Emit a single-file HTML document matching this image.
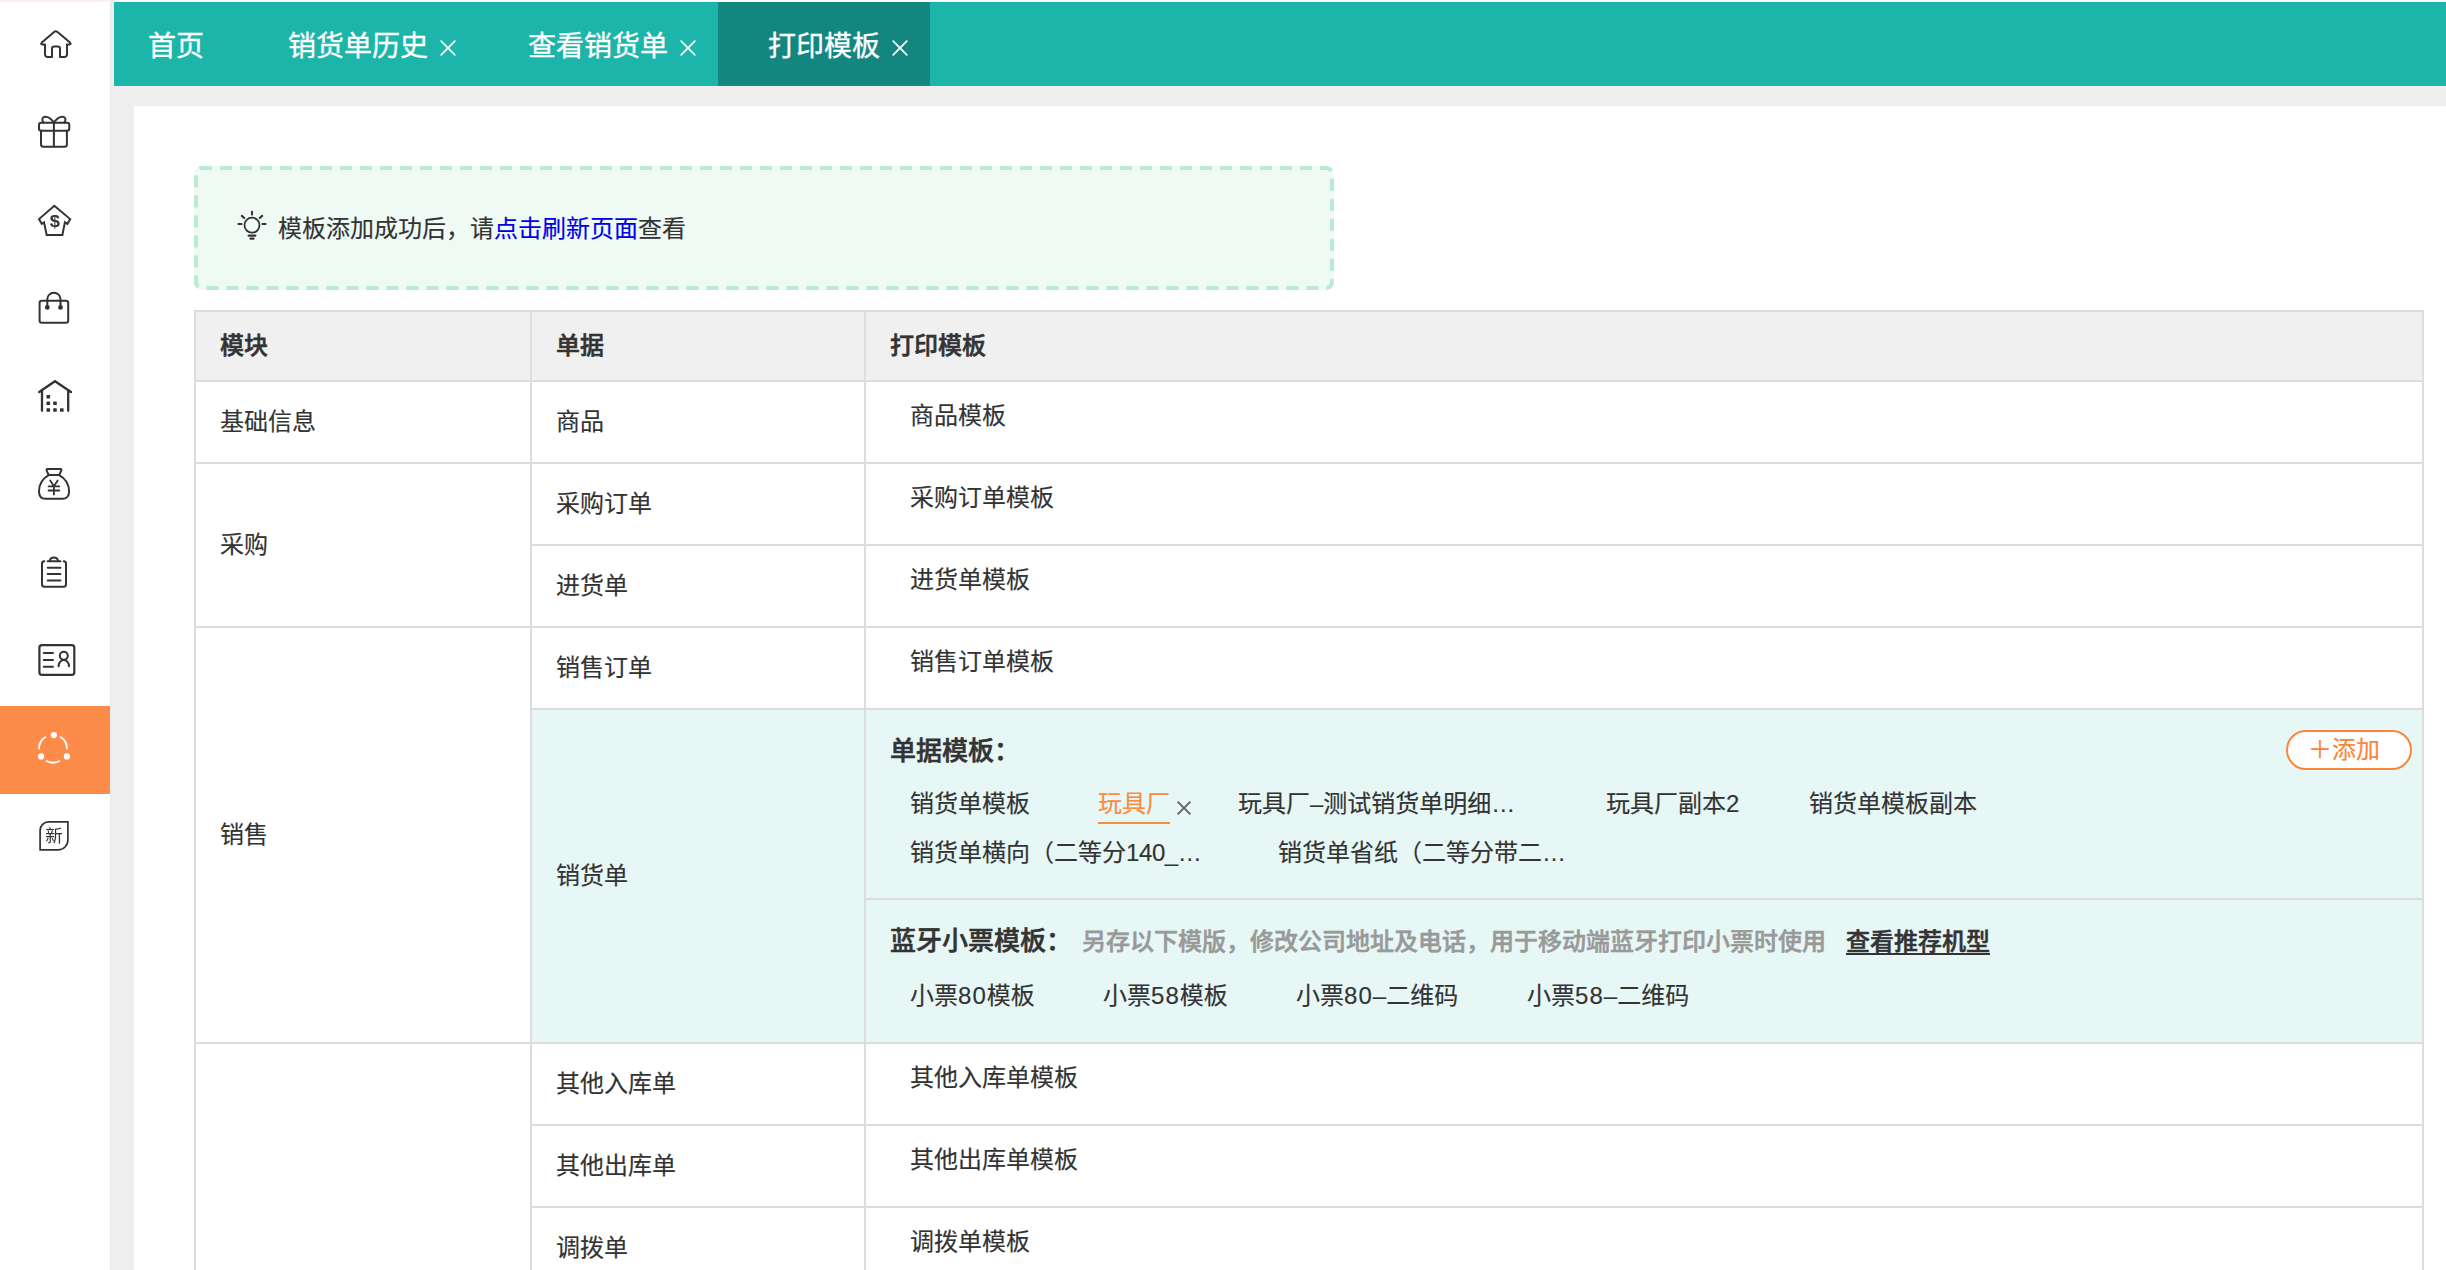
<!DOCTYPE html>
<html lang="zh-CN">
<head>
<meta charset="utf-8">
<title>打印模板</title>
<style>
*{box-sizing:border-box;margin:0;padding:0}
html,body{width:2446px;height:1270px;overflow:hidden;background:#eee}
body{position:relative;font-family:"Liberation Sans","Noto Sans CJK SC",sans-serif;color:#333;font-size:24px}
.abs{position:absolute}
a{text-decoration:none}
#side{position:absolute;left:0;top:0;width:110px;height:1270px;background:#fff;box-shadow:1px 0 0 #e9e9e9}
#side .pink{position:absolute;left:0;top:0;width:110px;height:2px;background:#fdf0ea}
#side .act{position:absolute;left:0;top:706px;width:110px;height:88px;background:#fd8c4a}
#side svg{position:absolute;left:0;top:0}
#topw{position:absolute;left:111px;top:0;width:2335px;height:2px;background:linear-gradient(90deg,#eee,#fff 12px)}
#tabs{position:absolute;left:114px;top:2px;width:2332px;height:84px;background:#1cb5a9}
#tabs .on{position:absolute;left:604px;top:0;width:212px;height:84px;background:#13877f}
.t{position:absolute;white-space:nowrap;line-height:40px;height:40px;-webkit-text-stroke:.15px}
#tabs .t{color:#fff;font-size:28px;top:25px;-webkit-text-stroke:.35px #fff}
#panel{position:absolute;left:134px;top:106px;width:2312px;height:1164px;background:#fff}
.hl{position:absolute;background:#ddd}
.bg{position:absolute}
.b{font-weight:500;-webkit-text-stroke:.55px}
.n{letter-spacing:1.05px}
</style>
</head>
<body>
<div id="side"><div class="pink"></div><div class="act"></div>
<svg style="will-change:transform" width="110" height="1270" viewBox="0 0 110 1270" fill="none" stroke="#333" stroke-width="2" stroke-linecap="round" stroke-linejoin="round">
<!-- home -->
<path d="M45 44.4H42.4Q40.2 44.2 41.8 42.6L54.1 32Q55.8 30.6 57.5 32L70 42.6Q71.6 44.2 69.4 44.4H67V54.5a2.5 2.5 0 0 1-2.5 2.5H60V48.6a2 2 0 0 0-2-2H54a2 2 0 0 0-2 2V57H47.5a2.5 2.5 0 0 1-2.5-2.5Z"/>
<!-- gift -->
<rect x="39" y="122.8" width="30.3" height="8" rx="2.2"/>
<path d="M41 130.8V144.3a2.5 2.5 0 0 0 2.5 2.5H64.4a2.5 2.5 0 0 0 2.5-2.5V130.8M53.9 122.8V146.8"/>
<path d="M53.9 122.4C51 118.6 47.4 116.4 44.9 116.7C42 117.1 41.5 120.2 43.6 122.6M53.9 122.4C56.8 118.6 60.4 116.4 62.9 116.7C65.8 117.1 66.3 120.2 64.2 122.6"/>
<!-- dollar house -->
<path d="M54.3 205.8L70.2 219.1L67.4 223.8L64.9 222.4L62.4 235H46.7L44 222.4L41.8 223.8L39 219.1Z" stroke-linejoin="miter"/>
<text transform="translate(54.7 227) scale(1.16 1)" text-anchor="middle" font-family="Liberation Sans, sans-serif" font-weight="700" font-size="15.7" fill="#333" stroke="none">$</text>
<!-- bag -->
<rect x="39.6" y="300.7" width="28.6" height="22.1" rx="2.2"/>
<path d="M47.3 307.4V299.3a6.6 6.6 0 0 1 13.2 0V307.4"/>
<circle cx="47.3" cy="307.4" r="1.4" fill="#333"/><circle cx="60.5" cy="307.4" r="1.4" fill="#333"/>
<!-- warehouse -->
<path d="M39.2 392L55 381.2L71 392M42 390.5V410.8M68.2 390.5V410.8" stroke-linejoin="miter" stroke-width="2.3"/>
<g fill="#333" stroke="none"><rect x="46.5" y="395" width="3.6" height="3.6" rx=".6"/><rect x="46.5" y="401.4" width="3.6" height="3.6" rx=".6"/><rect x="53.2" y="401.4" width="3.6" height="3.6" rx=".6"/><rect x="46.5" y="408.2" width="3.6" height="3.6" rx=".6"/><rect x="53.2" y="408.2" width="3.6" height="3.6" rx=".6"/><rect x="60" y="408.2" width="3.6" height="3.6" rx=".6"/></g>
<!-- money bag -->
<path d="M48.7 475.1L46.6 470.3a1 1 0 0 1 .9-1.4H60.5a1 1 0 0 1 .9 1.4L59.1 475.1Z"/>
<path d="M48.7 475.1C42.5 478.5 39 485 39 491.5C39 496 41.5 498.8 45.5 498.8H62.5C66.5 498.8 69.1 496 69.1 491.5C69.1 485 65.5 478.5 59.1 475.1"/>
<path d="M50.2 480.5L53.9 486.2L57.7 480.5M53.9 486.2V494.5M48.6 486.4H59.3M48.6 490.5H59.3" stroke-width="1.8"/>
<!-- clipboard -->
<path d="M44.3 561.2a2.4 2.4 0 0 0-2.3 2.4V584.3a2.5 2.5 0 0 0 2.5 2.5H63.5a2.5 2.5 0 0 0 2.5-2.5V563.6a2.4 2.4 0 0 0-2.3-2.4M47.7 561.2H60.4M49.6 561a4.4 4.4 0 0 1 8.6 0M47.7 567.7H60.4M47.7 574.1H60.4M47.7 580.4H60.4"/>
<!-- id card -->
<rect x="39.4" y="645.1" width="34.9" height="29.7" rx="2.6" stroke-width="2.2"/>
<path d="M43.8 653H53M43.8 659.9H53M43.8 666.8H53"/>
<circle cx="63.8" cy="655.8" r="4"/>
<path d="M58.6 666.2a5.2 6.2 0 0 1 10.4 0"/>
<!-- share (active) -->
<g stroke="#fff" stroke-width="1.9" stroke-linecap="butt"><path d="M45.9 736.7A14 14 0 0 0 39 749.2M60.1 736.7A14 14 0 0 1 67 749.2M46 760.8A14 14 0 0 0 60 760.8"/></g>
<g fill="#fff" stroke="none"><circle cx="53.9" cy="735.1" r="3.1"/><circle cx="41.1" cy="756.4" r="3.1"/><circle cx="66.9" cy="756.4" r="3.1"/></g>
<!-- new -->
<path d="M40.1 849.9V830.3a8.5 8.5 0 0 1 8.5-8.5H67.9V840a9.9 9.9 0 0 1-9.9 9.9Z" stroke-width="1.7" stroke-linejoin="miter"/>
<text x="53.9" y="842.2" text-anchor="middle" font-family="Noto Sans CJK SC, sans-serif" font-weight="400" font-size="17.5" fill="#333" stroke="none">新</text>
</svg>
</div>
<div id="topw"></div>
<div id="tabs"><div class="on"></div>
<div class="t" style="left:34px">首页</div>
<div class="t" style="left:174px">销货单历史</div><svg class="abs" style="left:326px;top:38px" width="16" height="16" viewBox="0 0 16 16"><path d="M0.7 0.7L15.3 15.3M15.3 0.7L0.7 15.3" stroke="#fff" stroke-width="1.7" fill="none"/></svg>
<div class="t" style="left:414px">查看销货单</div><svg class="abs" style="left:566px;top:38px" width="16" height="16" viewBox="0 0 16 16"><path d="M0.7 0.7L15.3 15.3M15.3 0.7L0.7 15.3" stroke="#fff" stroke-width="1.7" fill="none"/></svg>
<div class="t" style="left:654px">打印模板</div><svg class="abs" style="left:778px;top:38px" width="16" height="16" viewBox="0 0 16 16"><path d="M0.7 0.7L15.3 15.3M15.3 0.7L0.7 15.3" stroke="#fff" stroke-width="1.7" fill="none"/></svg>
</div>
<div id="panel"></div>
<svg class="abs" style="left:194px;top:166px" width="1140" height="124"><rect x="2" y="2" width="1136" height="120" rx="6" ry="6" fill="#f0faf5" stroke="#f0faf5" stroke-width="4"/><rect x="2" y="2" width="1136" height="120" rx="6" ry="6" fill="none" stroke="#b9ead3" stroke-width="4" stroke-dasharray="12 8" stroke-dashoffset="2"/></svg>
<svg class="abs" style="left:234px;top:208px" width="36" height="36" viewBox="234 208 36 36" fill="none" stroke="#333" stroke-width="1.8" stroke-linecap="round"><circle cx="252" cy="225.2" r="7.5"/><path stroke-width="2.1" d="M252 211.9V214.6M241.9 215.9L244.2 218M262.1 215.9L259.8 218M238.4 224H241.5M262.5 224H265.6M248.6 235.6H255.4M250.4 238.6H253.6"/></svg>
<div class="t" style="left:278px;top:209px">模板添加成功后，请<a style="color:#0000ee">点击刷新页面</a>查看</div>
<div id="tbl">
<div class="bg" style="left:196px;top:312px;width:2226px;height:68px;background:#f0f0f0"></div>
<div class="bg" style="left:532px;top:710px;width:1890px;height:332px;background:#e6f7f6"></div>
<div class="hl" style="left:194px;top:310px;width:2px;height:960px"></div>
<div class="hl" style="left:530px;top:310px;width:2px;height:960px"></div>
<div class="hl" style="left:864px;top:310px;width:2px;height:960px"></div>
<div class="hl" style="left:2422px;top:310px;width:2px;height:960px"></div>
<div class="hl" style="left:194px;top:310px;width:2230px;height:2px"></div>
<div class="hl" style="left:194px;top:380px;width:2230px;height:2px"></div>
<div class="hl" style="left:194px;top:462px;width:2230px;height:2px"></div>
<div class="hl" style="left:530px;top:544px;width:1894px;height:2px"></div>
<div class="hl" style="left:194px;top:626px;width:2230px;height:2px"></div>
<div class="hl" style="left:530px;top:708px;width:1894px;height:2px"></div>
<div class="hl" style="left:864px;top:898px;width:1560px;height:2px"></div>
<div class="hl" style="left:194px;top:1042px;width:2230px;height:2px"></div>
<div class="hl" style="left:530px;top:1124px;width:1894px;height:2px"></div>
<div class="hl" style="left:530px;top:1206px;width:1894px;height:2px"></div>
<div class="t b" style="left:220px;top:326px">模块</div>
<div class="t b" style="left:556px;top:326px">单据</div>
<div class="t b" style="left:890px;top:326px">打印模板</div>
<div class="t" style="left:220px;top:402px">基础信息</div>
<div class="t" style="left:220px;top:525px">采购</div>
<div class="t" style="left:220px;top:815px">销售</div>
<div class="t" style="left:556px;top:402px">商品</div>
<div class="t" style="left:556px;top:484px">采购订单</div>
<div class="t" style="left:556px;top:566px">进货单</div>
<div class="t" style="left:556px;top:648px">销售订单</div>
<div class="t" style="left:556px;top:856px">销货单</div>
<div class="t" style="left:556px;top:1064px">其他入库单</div>
<div class="t" style="left:556px;top:1146px">其他出库单</div>
<div class="t" style="left:556px;top:1228px">调拨单</div>
<div class="t" style="left:910px;top:396px">商品模板</div>
<div class="t" style="left:910px;top:478px">采购订单模板</div>
<div class="t" style="left:910px;top:560px">进货单模板</div>
<div class="t" style="left:910px;top:642px">销售订单模板</div>
<div class="t" style="left:910px;top:1058px">其他入库单模板</div>
<div class="t" style="left:910px;top:1140px">其他出库单模板</div>
<div class="t" style="left:910px;top:1222px">调拨单模板</div>
<div class="t b" style="left:890px;top:731px;font-size:26px">单据模板：</div>
<div class="t" style="left:910px;top:784px">销货单模板</div>
<div class="t" style="left:1098px;top:784px;color:#fb8b3e">玩具厂</div>
<div class="abs" style="left:1098px;top:822px;width:72px;height:2px;background:#fb8b3e"></div>
<svg class="abs" style="left:1176px;top:800px" width="16" height="16" viewBox="0 0 16 16"><path d="M1.6 1.6L14.4 14.4M14.4 1.6L1.6 14.4" stroke="#666" stroke-width="2" fill="none"/></svg>
<div class="t" style="left:1238px;top:784px">玩具厂–测试销货单明细…</div>
<div class="t" style="left:1606px;top:784px">玩具厂副本2</div>
<div class="t" style="left:1809px;top:784px">销货单模板副本</div>
<div class="t" style="left:910px;top:833px">销货单横向（二等分<span style="letter-spacing:-.4px">140_…</span></div>
<div class="t" style="left:1278px;top:833px">销货单省纸（二等分带二…</div>
<div class="abs" style="left:2286px;top:730px;width:126px;height:40px;border:2px solid #fd8439;border-radius:20px;background:#fff"></div>
<div class="t" style="left:2308px;top:730px;color:#fd8439"><span style="display:inline-block;width:24px">＋</span>添加</div>
<div class="t b" style="left:890px;top:921px;font-size:26px">蓝牙小票模板：</div>
<div class="t b" style="left:1082px;top:922px;color:#999">另存以下模版，修改公司地址及电话，用于移动端蓝牙打印小票时使用</div>
<div class="t b" style="left:1846px;top:922px"><a style="color:#333;text-decoration:underline;text-decoration-thickness:2px;text-underline-offset:3px">查看推荐机型</a></div>
<div class="t" style="left:910px;top:976px">小票<span class="n">80</span>模板</div>
<div class="t" style="left:1103px;top:976px">小票<span class="n">58</span>模板</div>
<div class="t" style="left:1296px;top:976px">小票<span class="n">80</span>–二维码</div>
<div class="t" style="left:1527px;top:976px">小票<span class="n">58</span>–二维码</div>
</div>
</body>
</html>
